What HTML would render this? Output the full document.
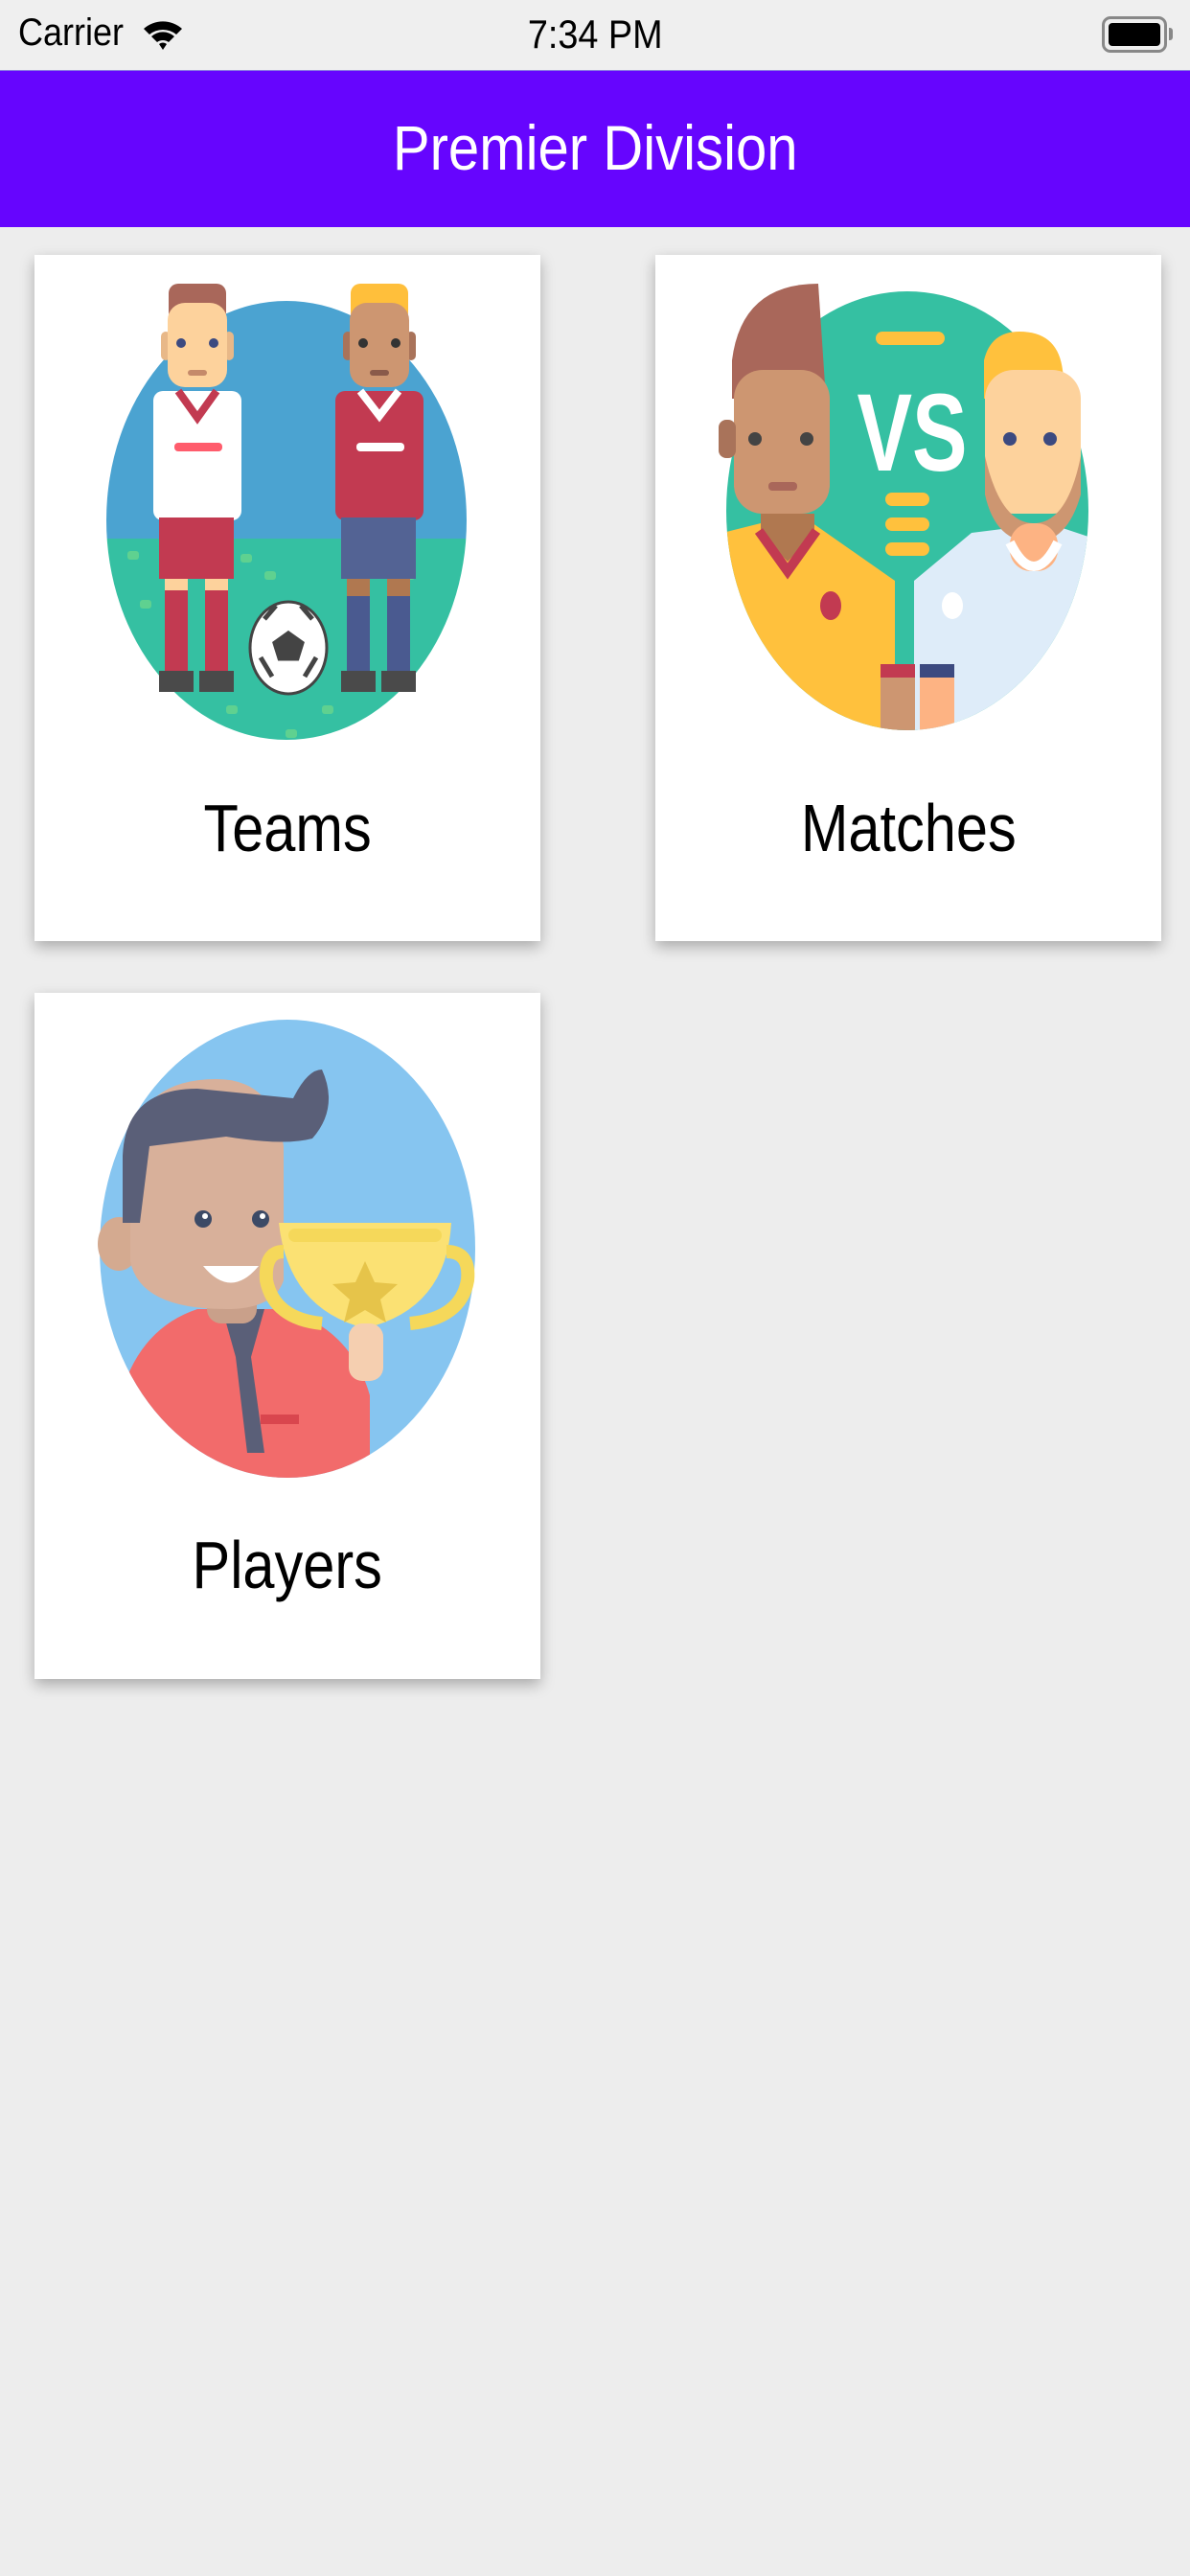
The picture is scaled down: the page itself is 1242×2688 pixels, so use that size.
<!DOCTYPE html>
<html><head><meta charset="utf-8"><style>
*{margin:0;padding:0;box-sizing:border-box}
body{width:1242px;height:2688px;background:#ededed;position:relative;overflow:hidden;font-family:"Liberation Sans",sans-serif}
.sb{position:absolute;left:0;top:0;width:1242px;height:73px;background:#efefef}
.hdr{position:absolute;left:0;top:73px;width:1242px;height:164px;background:#6605fe;border-top:1px solid #8a7fe0;color:#fff;font-size:66px;text-align:center;line-height:160px}
.card{position:absolute;width:528px;height:716px;background:#fff;box-shadow:0 6px 14px rgba(0,0,0,.28)}
.card svg{position:absolute;left:0;top:0}
.lbl{position:absolute;left:0;width:528px;text-align:center;font-size:70px;color:#000;top:553px;line-height:90px}
.n{display:inline-block;transform:scaleX(.85)}
.lbl .n{transform:scaleX(.85)}
</style></head><body>
<div class="sb">
<div style="position:absolute;left:19px;top:12px;font-size:40px;transform:scaleX(.9);transform-origin:left">Carrier</div>
<svg style="position:absolute;left:148px;top:16px" width="44" height="40" viewBox="0 0 44 40"><path d="M2 14 A30 30 0 0 1 42 14 L36 20 A22 22 0 0 0 8 20Z M10 22 A18 18 0 0 1 34 22 L28 28 A10 10 0 0 0 16 28Z M18 30 A6 6 0 0 1 26 30 L22 36Z" fill="#000"/></svg>
<div style="position:absolute;left:0;width:1242px;text-align:center;top:12px;font-size:42px"><span class="n" style="transform:scaleX(.9)">7:34 PM</span></div>
<div style="position:absolute;left:1150px;top:17px;width:68px;height:38px;border:3px solid #888;border-radius:9px;padding:4px"><div style="width:100%;height:100%;background:#000;border-radius:4px"></div></div>
<div style="position:absolute;left:1220px;top:29px;width:4px;height:13px;background:#888;border-radius:0 3px 3px 0"></div>
</div>
<div class="hdr"><span class="n" style="transform:scaleX(.88)">Premier Division</span></div>

<div class="card" style="left:36px;top:266px">
<svg width="528" height="716" viewBox="0 0 528 716">
<defs><clipPath id="c1"><ellipse cx="263" cy="277" rx="188" ry="229"/></clipPath></defs>
<g clip-path="url(#c1)"><rect x="0" y="0" width="528" height="296" fill="#4ba3d1"/><rect x="0" y="296" width="528" height="300" fill="#35c0a2"/>
<g fill="#5fd190"><rect x="97" y="309" width="12" height="9" rx="3"/><rect x="215" y="312" width="12" height="9" rx="3"/><rect x="240" y="330" width="12" height="9" rx="3"/><rect x="385" y="330" width="12" height="9" rx="3"/><rect x="110" y="360" width="12" height="9" rx="3"/><rect x="200" y="470" width="12" height="9" rx="3"/><rect x="262" y="495" width="12" height="9" rx="3"/><rect x="300" y="470" width="12" height="9" rx="3"/><rect x="372" y="378" width="12" height="9" rx="3"/></g></g>
<!-- left player -->
<rect x="140" y="30" width="60" height="40" rx="10" fill="#a9675a"/>
<rect x="132" y="80" width="10" height="30" rx="5" fill="#e8b888"/><rect x="198" y="80" width="10" height="30" rx="5" fill="#e8b888"/>
<rect x="139" y="50" width="62" height="88" rx="18" fill="#fdd29c"/>
<rect x="124" y="142" width="92" height="135" rx="10" fill="#fff"/>
<path d="M150 142 L170 170 L190 142" fill="none" stroke="#c23a51" stroke-width="8"/>
<rect x="146" y="196" width="50" height="9" rx="4" fill="#ff5c6c"/>
<rect x="130" y="274" width="78" height="64" fill="#c23a51"/>
<rect x="136" y="338" width="24" height="12" fill="#fdd29c"/><rect x="178" y="338" width="24" height="12" fill="#fdd29c"/>
<rect x="136" y="350" width="24" height="86" fill="#c23a51"/><rect x="178" y="350" width="24" height="86" fill="#c23a51"/>
<rect x="130" y="434" width="36" height="22" fill="#4a4a4a"/><rect x="172" y="434" width="36" height="22" fill="#4a4a4a"/>
<circle cx="153" cy="92" r="5" fill="#3c4a80"/><circle cx="187" cy="92" r="5" fill="#3c4a80"/>
<rect x="160" y="120" width="20" height="6" rx="3" fill="#c58a6a"/>
<!-- right player -->
<rect x="330" y="30" width="60" height="40" rx="10" fill="#ffbf3b"/>
<rect x="322" y="80" width="10" height="30" rx="5" fill="#a9735a"/><rect x="388" y="80" width="10" height="30" rx="5" fill="#a9735a"/>
<rect x="329" y="50" width="62" height="88" rx="18" fill="#cd9671"/>
<rect x="314" y="142" width="92" height="135" rx="10" fill="#c23a51"/>
<path d="M340 142 L360 168 L380 142" fill="none" stroke="#fff" stroke-width="8"/>
<rect x="336" y="196" width="50" height="9" rx="4" fill="#fff"/>
<rect x="320" y="274" width="78" height="64" fill="#536394"/>
<rect x="326" y="338" width="24" height="20" fill="#b07850"/><rect x="368" y="338" width="24" height="20" fill="#b07850"/>
<rect x="326" y="356" width="24" height="80" fill="#4a5a90"/><rect x="368" y="356" width="24" height="80" fill="#4a5a90"/>
<rect x="320" y="434" width="36" height="22" fill="#4a4a4a"/><rect x="362" y="434" width="36" height="22" fill="#4a4a4a"/>
<circle cx="343" cy="92" r="5" fill="#333"/><circle cx="377" cy="92" r="5" fill="#333"/>
<rect x="350" y="120" width="20" height="6" rx="3" fill="#8a5a4a"/>
<ellipse cx="265" cy="410" rx="40" ry="48" fill="#fff" stroke="#444" stroke-width="3"/>
<path d="M265 395 l14 10 -5 16 -18 0 -5 -16z M240 380 l12 -14 M290 380 l-12 -14 M236 420 l12 20 M294 420 l-12 20" fill="#444" stroke="#444" stroke-width="5"/>
</svg>
<div class="lbl"><span class="n">Teams</span></div></div>

<div class="card" style="left:684px;top:266px">
<svg width="528" height="716" viewBox="0 0 528 716">
<defs><clipPath id="c2"><ellipse cx="263" cy="267" rx="189" ry="229"/></clipPath></defs>
<g clip-path="url(#c2)"><rect width="528" height="716" fill="#35c0a2"/>
<path d="M70 290 L150 270 L250 340 L250 520 L70 520Z" fill="#ffc13d"/>
<path d="M270 340 L330 290 L410 280 L470 300 L470 520 L270 520Z" fill="#deecf9"/>
<rect x="235" y="430" width="36" height="90" fill="#cd9671"/><rect x="276" y="430" width="36" height="90" fill="#fdb383"/>
<rect x="235" y="427" width="36" height="14" fill="#c23a51"/><rect x="276" y="427" width="36" height="14" fill="#3c4a80"/>
<ellipse cx="183" cy="366" rx="11" ry="15" fill="#c23a51"/><ellipse cx="310" cy="366" rx="11" ry="14" fill="#fff"/>
</g>
<path d="M80 110 Q90 30 170 30 L178 150 L80 150Z" fill="#a9675a"/>
<rect x="82" y="120" width="100" height="150" rx="30" fill="#cd9671"/>
<rect x="66" y="172" width="18" height="40" rx="8" fill="#a9735a"/>
<path d="M110 270 L110 290 L138 320 L166 290 L166 270Z" fill="#b07850"/>
<path d="M108 288 L138 330 L168 288" fill="none" stroke="#c23a51" stroke-width="10"/>
<circle cx="104" cy="192" r="7" fill="#444"/><circle cx="158" cy="192" r="7" fill="#444"/>
<rect x="118" y="237" width="30" height="9" rx="4" fill="#a9675a"/>
<path d="M343 110 Q350 80 380 80 Q420 80 425 120 L430 150 L343 150Z" fill="#ffc13d"/>
<rect x="344" y="120" width="100" height="150" rx="30" fill="#fdd29c"/>
<path d="M344 210 Q360 280 395 280 Q430 280 444 210 L444 250 Q430 300 395 300 Q355 300 344 250Z" fill="#cd9671"/>
<rect x="370" y="280" width="50" height="50" rx="22" fill="#fdb383"/>
<path d="M370 300 Q395 350 420 300" fill="none" stroke="#fff" stroke-width="10"/>
<circle cx="370" cy="192" r="7" fill="#3c4a80"/><circle cx="412" cy="192" r="7" fill="#3c4a80"/>
<text x="268" y="225" text-anchor="middle" font-family="Liberation Sans,sans-serif" font-weight="bold" font-size="115" fill="#fff" transform="translate(268 0) scale(0.75 1) translate(-268 0)">VS</text>
<g fill="#ffc13d"><rect x="230" y="80" width="72" height="14" rx="7"/><rect x="240" y="248" width="46" height="14" rx="7"/><rect x="240" y="274" width="46" height="14" rx="7"/><rect x="240" y="300" width="46" height="14" rx="7"/></g>
</svg>
<div class="lbl"><span class="n">Matches</span></div></div>

<div class="card" style="left:36px;top:1036px">
<svg width="528" height="716" viewBox="0 0 528 716">
<defs><clipPath id="c3"><ellipse cx="264" cy="267" rx="196" ry="239"/></clipPath></defs>
<g clip-path="url(#c3)"><rect width="528" height="716" fill="#86c5f0"/>
<path d="M90 420 Q110 350 170 330 L260 330 Q330 350 350 420 L350 520 L90 520Z" fill="#f26b6b"/>
<path d="M196 330 L210 380 L222 480 L240 480 L226 380 L240 330Z" fill="#5a5f78"/>
<rect x="236" y="440" width="40" height="10" fill="#d9464e"/>
<rect x="180" y="300" width="52" height="45" rx="15" fill="#c9a08a"/>
</g>
<ellipse cx="88" cy="262" rx="22" ry="28" fill="#d4aa90"/>
<path d="M100 180 Q100 90 190 90 Q250 90 260 160 L260 300 Q250 330 200 330 Q110 330 100 280Z" fill="#d8b09a"/>
<path d="M92 240 L92 170 Q95 100 170 100 L270 110 Q285 80 300 80 Q318 120 290 152 Q260 160 200 150 L120 160 L110 240Z" fill="#5a5f78"/>
<circle cx="176" cy="236" r="9" fill="#3c4a66"/><circle cx="236" cy="236" r="9" fill="#3c4a66"/>
<circle cx="178" cy="233" r="3" fill="#fff"/><circle cx="238" cy="233" r="3" fill="#fff"/>
<path d="M176 285 Q205 320 234 285Z" fill="#fff"/>
<path d="M255 240 L435 240 Q430 330 345 350 Q265 330 255 240Z" fill="#fbe173"/>
<path d="M260 270 Q240 270 242 300 Q250 340 300 345" fill="none" stroke="#f5d85a" stroke-width="14"/>
<path d="M430 270 Q455 270 452 300 Q445 340 392 345" fill="none" stroke="#f5d85a" stroke-width="14"/>
<rect x="265" y="246" width="160" height="14" rx="7" fill="#f5d85a"/>
<path d="M345 280 l10 22 24 2 -18 16 6 24 -22 -13 -22 13 6 -24 -18 -16 24 -2z" fill="#e6c44a"/>
<rect x="328" y="345" width="36" height="60" rx="14" fill="#f5cfb0"/>
</svg>
<div class="lbl" style="top:552px"><span class="n">Players</span></div></div>
</body></html>
